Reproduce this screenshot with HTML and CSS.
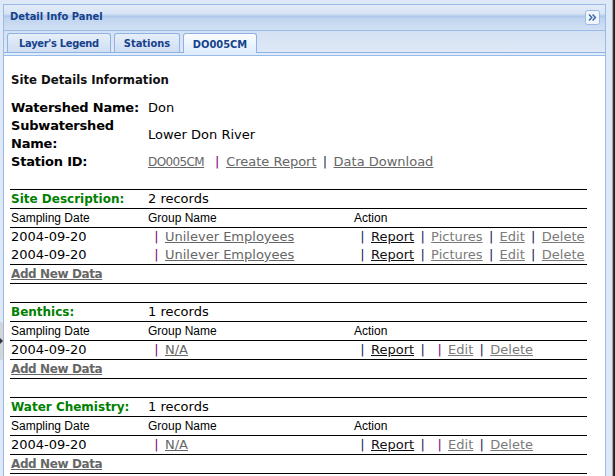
FILE: index.html
```html
<!DOCTYPE html>
<html>
<head>
<meta charset="utf-8">
<title>Detail Info Panel</title>
<link rel="stylesheet" href="styles.css">
</head>
<body>
<div class="page">
  <div class="mini"><span class="mini-arrow"></span></div>
  <div class="panel">
    <div class="panel-header">
      <span class="panel-title">Detail Info Panel</span>
      <span class="tool">
        <svg width="15" height="15" viewBox="0 0 15 15">
          <rect x="0.5" y="0.5" width="14" height="14" rx="2" fill="#f1f6fc" stroke="#9ab9e3"/>
          <path d="M4 4.5 L6.8 7.5 L4 10.5 M7.6 4.5 L10.4 7.5 L7.6 10.5" fill="none" stroke="#3e6aa6" stroke-width="1.5"/>
        </svg>
      </span>
    </div>
    <div class="tabbar">
      <div class="tab t1">Layer's Legend</div>
      <div class="tab t2">Stations</div>
      <div class="tab t3 active">DO005CM</div>
    </div>
    <div class="tabedge"></div>
    <div class="body">
      <h2 class="title">Site Details Information</h2>
      <div class="info">
        <div class="lbl">Watershed Name:</div><div class="val">Don</div>
        <div class="lbl">Subwatershed Name:</div><div class="val">Lower Don River</div>
        <div class="lbl">Station ID:</div>
        <div class="val"><a class="lnk sid">DO005CM</a><span class="sep purple first">|</span><a class="lnk">Create Report</a><span class="sep navy">|</span><a class="lnk">Data Download</a></div>
      </div>

      <div class="section">
        <div class="row">
          <div class="c1 sect">Site Description:</div><div class="c2">2 records</div>
        </div>
        <div class="row cols">
          <div class="c1">Sampling Date</div><div class="c2">Group Name</div><div class="c3">Action</div>
        </div>
        <div class="rows">
          <div class="drow">
            <div class="c1">2004-09-20</div>
            <div class="c2"><span class="sep purple">|</span><a class="lnk">Unilever Employees</a></div>
            <div class="c3"><span class="sep navy">|</span><a class="lnk dark">Report</a><span class="sep navy">|</span><a class="lnk light">Pictures</a><span class="sep navy">|</span><a class="lnk light">Edit</a><span class="sep navy">|</span><a class="lnk light">Delete</a></div>
          </div>
          <div class="drow">
            <div class="c1">2004-09-20</div>
            <div class="c2"><span class="sep purple">|</span><a class="lnk">Unilever Employees</a></div>
            <div class="c3"><span class="sep navy">|</span><a class="lnk dark">Report</a><span class="sep navy">|</span><a class="lnk light">Pictures</a><span class="sep navy">|</span><a class="lnk light">Edit</a><span class="sep navy">|</span><a class="lnk light">Delete</a></div>
          </div>
        </div>
        <div class="row"><a class="add">Add New Data</a></div>
      </div>

      <div class="section">
        <div class="row">
          <div class="c1 sect">Benthics:</div><div class="c2">1 records</div>
        </div>
        <div class="row cols">
          <div class="c1">Sampling Date</div><div class="c2">Group Name</div><div class="c3">Action</div>
        </div>
        <div class="rows">
          <div class="drow">
            <div class="c1">2004-09-20</div>
            <div class="c2"><span class="sep purple">|</span><a class="lnk">N/A</a></div>
            <div class="c3"><span class="sep navy">|</span><a class="lnk dark">Report</a><span class="sep navy">|</span><span class="sep purple">|</span><a class="lnk light">Edit</a><span class="sep navy">|</span><a class="lnk light">Delete</a></div>
          </div>
        </div>
        <div class="row"><a class="add">Add New Data</a></div>
      </div>

      <div class="section">
        <div class="row">
          <div class="c1 sect">Water Chemistry:</div><div class="c2">1 records</div>
        </div>
        <div class="row cols">
          <div class="c1">Sampling Date</div><div class="c2">Group Name</div><div class="c3">Action</div>
        </div>
        <div class="rows">
          <div class="drow">
            <div class="c1">2004-09-20</div>
            <div class="c2"><span class="sep purple">|</span><a class="lnk">N/A</a></div>
            <div class="c3"><span class="sep navy">|</span><a class="lnk dark">Report</a><span class="sep navy">|</span><span class="sep purple">|</span><a class="lnk light">Edit</a><span class="sep navy">|</span><a class="lnk light">Delete</a></div>
          </div>
        </div>
        <div class="row noline"><a class="add">Add New Data</a></div>
      </div>
    </div>
  </div>
  <div class="edge"></div>
</div>
</body>
</html>
```

FILE: styles.css
```css
html, body {
  margin: 0;
  padding: 0;
}
body {
  width: 615px;
  height: 476px;
  overflow: hidden;
  background: #dfe8f6;
  font-family: "DejaVu Sans", Verdana, sans-serif;
  font-size: 13px;
  color: #000;
}
.page {
  position: relative;
  display: flex;
  height: 476px;
  padding-left: 3px;
  box-sizing: border-box;
}
.mini {
  position: absolute;
  left: 0;
  top: 322px;
  width: 3px;
  height: 38px;
  background: #d4d4d4;
  border-radius: 0 2px 2px 0;
}
.mini-arrow {
  position: absolute;
  left: 0;
  top: 16px;
  width: 0;
  height: 0;
  border-top: 3px solid transparent;
  border-bottom: 3px solid transparent;
  border-left: 3px solid #333;
}
.panel {
  margin-top: 4px;
  width: 603px;
  border: 1px solid #99bbe8;
  border-bottom: none;
  box-sizing: border-box;
  display: flex;
  flex-direction: column;
  background: #fff;
}
.edge {
  margin-left: 6px;
  width: 3px;
  background: linear-gradient(to right, #a9a9a9 0, #a9a9a9 1px, #3a3a3a 1px, #1e1e1e 3px);
}
.panel-header {
  height: 25px;
  border-bottom: 1px solid #99bbe8;
  display: flex;
  align-items: center;
  justify-content: space-between;
  padding: 0 5px 0 6px;
  background: linear-gradient(to bottom, #e3ecf8 0px, #d7e4f5 9px, #bcd2ee 10px, #adc7ea 12px, #c0d4ef 13px, #c9daf1 19px, #d2e0f3 25px);
}
.panel-title {
  font-family: "DejaVu Sans Condensed", "DejaVu Sans", sans-serif;
  font-stretch: condensed;
  font-weight: bold;
  font-size: 11px;
  line-height: 15px;
  color: #15428b;
  margin-top: -2px;
}
.tool {
  display: flex;
  width: 15px;
  height: 15px;
}
.tabbar {
  height: 21px;
  border-bottom: 1px solid #8db2e3;
  display: flex;
  align-items: flex-end;
  gap: 3px;
  padding-left: 3px;
  background: linear-gradient(to bottom, #d3e1f3, #dfe8f6);
}
.tab {
  height: 19px;
  box-sizing: border-box;
  border: 1px solid #8db2e3;
  border-bottom: none;
  border-radius: 3px 3px 0 0;
  display: flex;
  align-items: center;
  justify-content: center;
  font-family: "DejaVu Sans Condensed", "DejaVu Sans", sans-serif;
  font-stretch: condensed;
  font-weight: bold;
  font-size: 11px;
  color: #15428b;
  background: linear-gradient(to bottom, #e6eef9, #d0def2);
  white-space: nowrap;
  padding-top: 1px;
}
.t1 { width: 104px; letter-spacing: -0.3px; }
.t2 { width: 66px; }
.t3 { width: 74px; }
.tab.active {
  height: 20px;
  margin-bottom: -1px;
  background: linear-gradient(to bottom, #fbfdff, #deecfd);
}
.tabedge {
  height: 2px;
  background: #deecfd;
  border-bottom: 1px solid #99bbe8;
}
.body {
  flex: 1;
  padding: 15px 0 0 6px;
}
.title {
  margin: 0 0 10px 0;
  padding-left: 1px;
  font-family: "DejaVu Sans Condensed", "DejaVu Sans", sans-serif;
  font-stretch: condensed;
  font-weight: bold;
  font-size: 13px;
  line-height: 18px;
  color: #111;
}
.info {
  display: grid;
  grid-template-columns: 138px auto;
  line-height: 18px;
}
.lbl {
  padding-left: 1px;
  font-weight: bold;
  letter-spacing: -0.2px;
}
.val {
  align-self: center;
  white-space: nowrap;
}
.lnk {
  color: #666;
  text-decoration: underline;
}
.lnk.dark { color: #111; }
.lnk.light { color: #7a7a7a; }
.sid { font-size: 12px; letter-spacing: -0.6px; }
.sep {
  display: inline-block;
  width: 17px;
  text-align: center;
}
.sep.first {
  width: 22px;
  padding-left: 4px;
  box-sizing: border-box;
}
.purple { color: #800080; }
.navy { color: #1c1c55; }
.section {
  width: 577px;
  margin-top: 18px;
  border-top: 1px solid #000;
}
.row {
  display: flex;
  height: 18px;
  line-height: 18px;
  border-bottom: 1px solid #000;
  white-space: nowrap;
}
.rows {
  border-bottom: 1px solid #000;
}
.drow {
  display: flex;
  height: 18px;
  line-height: 18px;
  white-space: nowrap;
}
.c1 {
  width: 138px;
  padding-left: 1px;
  box-sizing: border-box;
  flex: none;
}
.c2 {
  width: 206px;
  flex: none;
}
.c3 {
  flex: 1;
}
.cols {
  font-family: "Liberation Sans", Arial, sans-serif;
  font-size: 12px;
}
.sect {
  color: #008000;
  font-weight: bold;
  font-size: 12px;
}
.add {
  padding-left: 1px;
  color: #666;
  font-weight: bold;
  font-size: 12px;
  letter-spacing: -0.4px;
  text-decoration: underline;
}
```
